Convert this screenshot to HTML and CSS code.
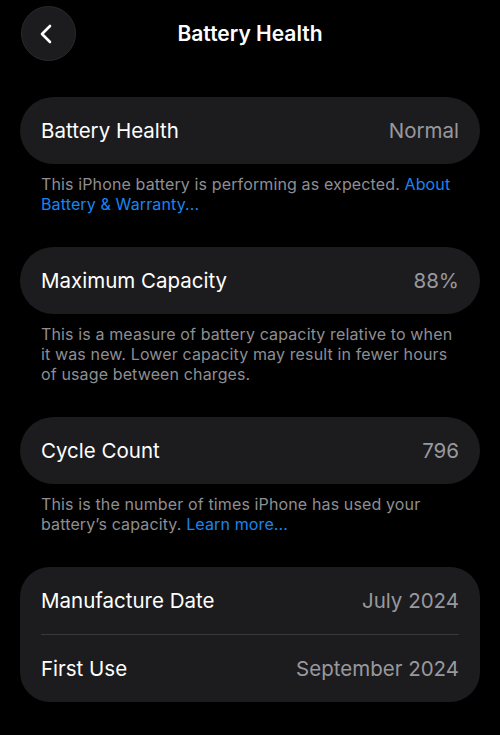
FILE: index.html
```html
<!DOCTYPE html>
<html lang="en">
<head>
    <meta charset="UTF-8">
    <meta name="viewport" content="width=device-width, initial-scale=1.0">
    <title>Battery Health</title>
    <link rel="stylesheet" href="styles.css">
</head>
<body>

    <header class="nav">
        <button class="back" aria-label="Back">
            <svg width="22" height="22" viewBox="0 0 22 22">
                <path d="M14 3 L6 11 L14 19" fill="none" stroke="#fff" stroke-width="2.6" stroke-linecap="round" stroke-linejoin="round"/>
            </svg>
        </button>
        <h1 class="title">Battery Health</h1>
    </header>

    <main class="content">
        <div class="card">
            <div class="row">
                <span class="label">Battery Health</span>
                <span class="value">Normal</span>
            </div>
        </div>
        <p class="note">This iPhone battery is performing as expected. <a href="#">About Battery &amp; Warranty...</a></p>

        <div class="card">
            <div class="row">
                <span class="label">Maximum Capacity</span>
                <span class="value">88%</span>
            </div>
        </div>
        <p class="note">This is a measure of battery capacity relative to when it was new. Lower capacity may result in fewer hours of usage between charges.</p>

        <div class="card">
            <div class="row">
                <span class="label">Cycle Count</span>
                <span class="value">796</span>
            </div>
        </div>
        <p class="note">This is the number of times iPhone has used your battery’s capacity. <a href="#">Learn more...</a></p>

        <div class="card card-group">
            <div class="row">
                <span class="label">Manufacture Date</span>
                <span class="value">July 2024</span>
            </div>
            <div class="row">
                <span class="label">First Use</span>
                <span class="value">September 2024</span>
            </div>
        </div>
    </main>

</body>
</html>
```

FILE: styles.css
```css
body {
    background-color: #000;
    margin: 0;
    font-family: Inter, "Noto Sans", sans-serif;
    color: #fff;
}

.nav {
    position: relative;
    height: 55px;
    padding-top: 6px;
    display: flex;
    align-items: center;
    justify-content: center;
}

.back {
    position: absolute;
    left: 21px;
    top: 6px;
    width: 55px;
    height: 55px;
    border-radius: 50%;
    border: 1px solid #2a2a2c;
    background-color: #1c1c1e;
    display: flex;
    align-items: center;
    justify-content: center;
    padding: 0;
    padding-right: 3px;
}

.title {
    margin: 0;
    font-size: 21px;
    font-weight: 600;
}

.content {
    padding: 36px 20px 0;
}

.card {
    background-color: #1c1c1e;
    border-radius: 34px;
}

.card-group {
    border-radius: 30px;
}

.row {
    height: 67px;
    display: flex;
    align-items: center;
    justify-content: space-between;
    padding: 0 21px;
    font-size: 20.5px;
}

.card-group .row + .row {
    border-top: 1px solid #38383a;
}

.card-group .row {
    margin: 0 21px;
    padding: 0;
}

.value {
    color: #98989e;
}

.note {
    margin: 10px 0 33px;
    padding: 0 21px;
    font-size: 16px;
    line-height: 20px;
    letter-spacing: 0.13px;
    color: #8e8e93;
}

.note a {
    color: #1a84f0;
    text-decoration: none;
}
```
